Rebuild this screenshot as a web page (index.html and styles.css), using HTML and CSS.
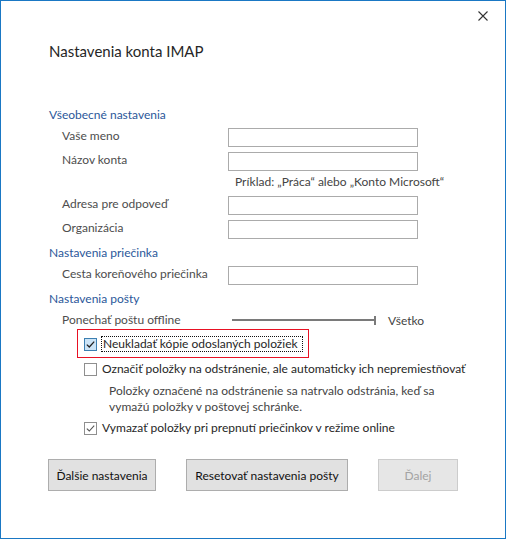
FILE: index.html
```html
<!DOCTYPE html>
<html lang="sk">
<head>
  <meta charset="UTF-8">
  <meta name="viewport" content="width=device-width, initial-scale=1.0">
  <title>Nastavenia konta IMAP</title>
  <link rel="stylesheet" href="styles.css">
</head>
<body>
  <div class="dialog">
    <!-- Horny pruh so zatvaracim krizikom -->
    <div class="titlebar">
      <span class="close">
        <svg width="10" height="10" viewBox="0 0 10 10"><path d="M0.5 0.5 L9.5 9.5 M9.5 0.5 L0.5 9.5" stroke="#333" stroke-width="1.1" fill="none"/></svg>
      </span>
    </div>

    <div class="content">
      <h1 class="heading">Nastavenia konta IMAP</h1>

      <div class="group">
        <div class="group-title">Všeobecné nastavenia</div>
        <div class="field">
          <label>Vaše meno</label>
          <input type="text">
        </div>
        <div class="field">
          <label>Názov konta</label>
          <input type="text">
        </div>
        <div class="hint">Príklad: „Práca“ alebo „Konto Microsoft“</div>
        <div class="field">
          <label>Adresa pre odpoveď</label>
          <input type="text">
        </div>
        <div class="field">
          <label>Organizácia</label>
          <input type="text">
        </div>
      </div>

      <div class="group">
        <div class="group-title">Nastavenia priečinka</div>
        <div class="field">
          <label>Cesta koreňového priečinka</label>
          <input type="text">
        </div>
      </div>

      <div class="group">
        <div class="group-title">Nastavenia pošty</div>
        <div class="offline">
          <label>Ponechať poštu offline</label>
          <div class="slider"><span class="thumb"></span></div>
          <span class="slider-value">Všetko</span>
        </div>

        <div class="highlight">
          <div class="option">
            <span class="box checked">
              <svg width="11" height="11" viewBox="0 0 11 11"><path d="M1.8 5.6 L4.3 8 L9.2 2.6" stroke="#222" stroke-width="1.3" fill="none"/></svg>
            </span>
            <span class="focus">Neukladať kópie odoslaných položiek</span>
          </div>
        </div>

        <div class="option row">
          <span class="box"></span>
          <span>Označiť položky na odstránenie, ale automaticky ich nepremiestňovať</span>
        </div>
        <p class="note">Položky označené na odstránenie sa natrvalo odstránia, keď sa vymažú položky v poštovej schránke.</p>
        <div class="option row">
          <span class="box">
            <svg width="11" height="11" viewBox="0 0 11 11"><path d="M1.8 5.6 L4.3 8 L9.2 2.6" stroke="#555" stroke-width="1.1" fill="none"/></svg>
          </span>
          <span>Vymazať položky pri prepnutí priečinkov v režime online</span>
        </div>
      </div>

      <div class="buttons">
        <button class="btn more">Ďalšie nastavenia</button>
        <button class="btn reset">Resetovať nastavenia pošty</button>
        <button class="btn next" disabled>Ďalej</button>
      </div>
    </div>
  </div>
</body>
</html>
```

FILE: styles.css
```css
body {
  margin: 0;
  background-color: white;
  font-family: "Segoe UI", Lato, "Noto Sans", sans-serif;
  font-size: 12px;
  color: #262626;
}

.dialog {
  box-sizing: border-box;
  width: 506px;
  height: 539px;
  border: 1px solid #1a78c4;
  background-color: white;
}

.titlebar {
  display: flex;
  justify-content: flex-end;
  height: 30px;
  padding-right: 17px;
}

.close {
  display: block;
  width: 10px;
  height: 10px;
  margin-top: 10px;
}

.close svg {
  display: block;
}

.content {
  padding-left: 48px;
}

.heading {
  margin: 10px 0 0;
  font-size: 15px;
  font-weight: normal;
  line-height: 20px;
  color: #262626;
}

.group-title {
  line-height: 16px;
  color: #2b579a;
  margin-bottom: 5px;
}

/* posledne pole skupiny ma spodny okraj 5px, ten sa zlieva s tymto */
.group {
  margin-top: 6px;
}

.group:first-of-type {
  margin-top: 46px;
}

.field {
  display: grid;
  grid-template-columns: 179px 190px;
  align-items: start;
  height: 19px;
  margin-bottom: 5px;
}

.field label,
.offline label {
  padding-left: 13px;
  line-height: 16px;
  color: #4d4d4d;
}

.field input {
  box-sizing: border-box;
  width: 190px;
  height: 19px;
  margin: 0;
  border: 1px solid #ababab;
  background-color: white;
}

.hint {
  margin: -2px 0 6px 186px;
  line-height: 16px;
  color: #444;
}

.offline {
  display: flex;
  align-items: center;
  height: 16px;
}

.offline label {
  box-sizing: border-box;
  width: 179px;
  flex: none;
}

/* posuvnik je cely vpravo, takze vidno len ciaru a koncovy jazdec */
.slider {
  display: flex;
  align-items: center;
  justify-content: flex-end;
  width: 144px;
  height: 2px;
  margin-left: 4px;
  background-color: #7a7a7a;
}

.thumb {
  display: block;
  width: 2px;
  height: 9px;
  background-color: #7a7a7a;
}

.slider-value {
  margin-left: 12px;
  color: #444;
}

/* cervene oramovanie okolo prvej volby */
.highlight {
  box-sizing: border-box;
  display: flex;
  width: 232px;
  margin: 1px 0 0 28px;
  padding: 6px 5px 5px 6px;
  border: 1px solid rgb(232, 17, 35);
}

.highlight .option {
  flex: 1;
}

.highlight .focus {
  flex: 1;
}

.option {
  display: flex;
  align-items: center;
  gap: 4px;
  line-height: 16px;
}

.option.row {
  margin-left: 35px;
  gap: 5px;
}

.box {
  box-sizing: border-box;
  display: flex;
  align-items: center;
  justify-content: center;
  width: 13px;
  height: 13px;
  border: 1px solid #8f8f8f;
  background-color: white;
  flex: none;
}

.box.checked {
  border-color: #3c7fb1;
  background-color: #cce4f7;
}

.focus {
  line-height: 14px;
  padding: 0 1px;
  border: 1px dotted #111;
}

.highlight + .option.row {
  margin-top: 3px;
}

.note {
  margin: 6px 0 5px 60px;
  width: 340px;
  line-height: 16px;
  color: #444;
}

.buttons {
  display: flex;
  gap: 30px;
  margin: 23px 0 0 -1px;
}

.btn {
  box-sizing: border-box;
  height: 32px;
  padding: 0;
  border: 1px solid #adadad;
  background-color: #e1e1e1;
  font-family: inherit;
  font-size: 12px;
  color: #111;
}

.more { width: 108px; }
.reset { width: 162px; }

.next {
  width: 80px;
  border-color: #cccccc;
  background-color: #e6e6e6;
  color: #a3a3a3;
}
```
